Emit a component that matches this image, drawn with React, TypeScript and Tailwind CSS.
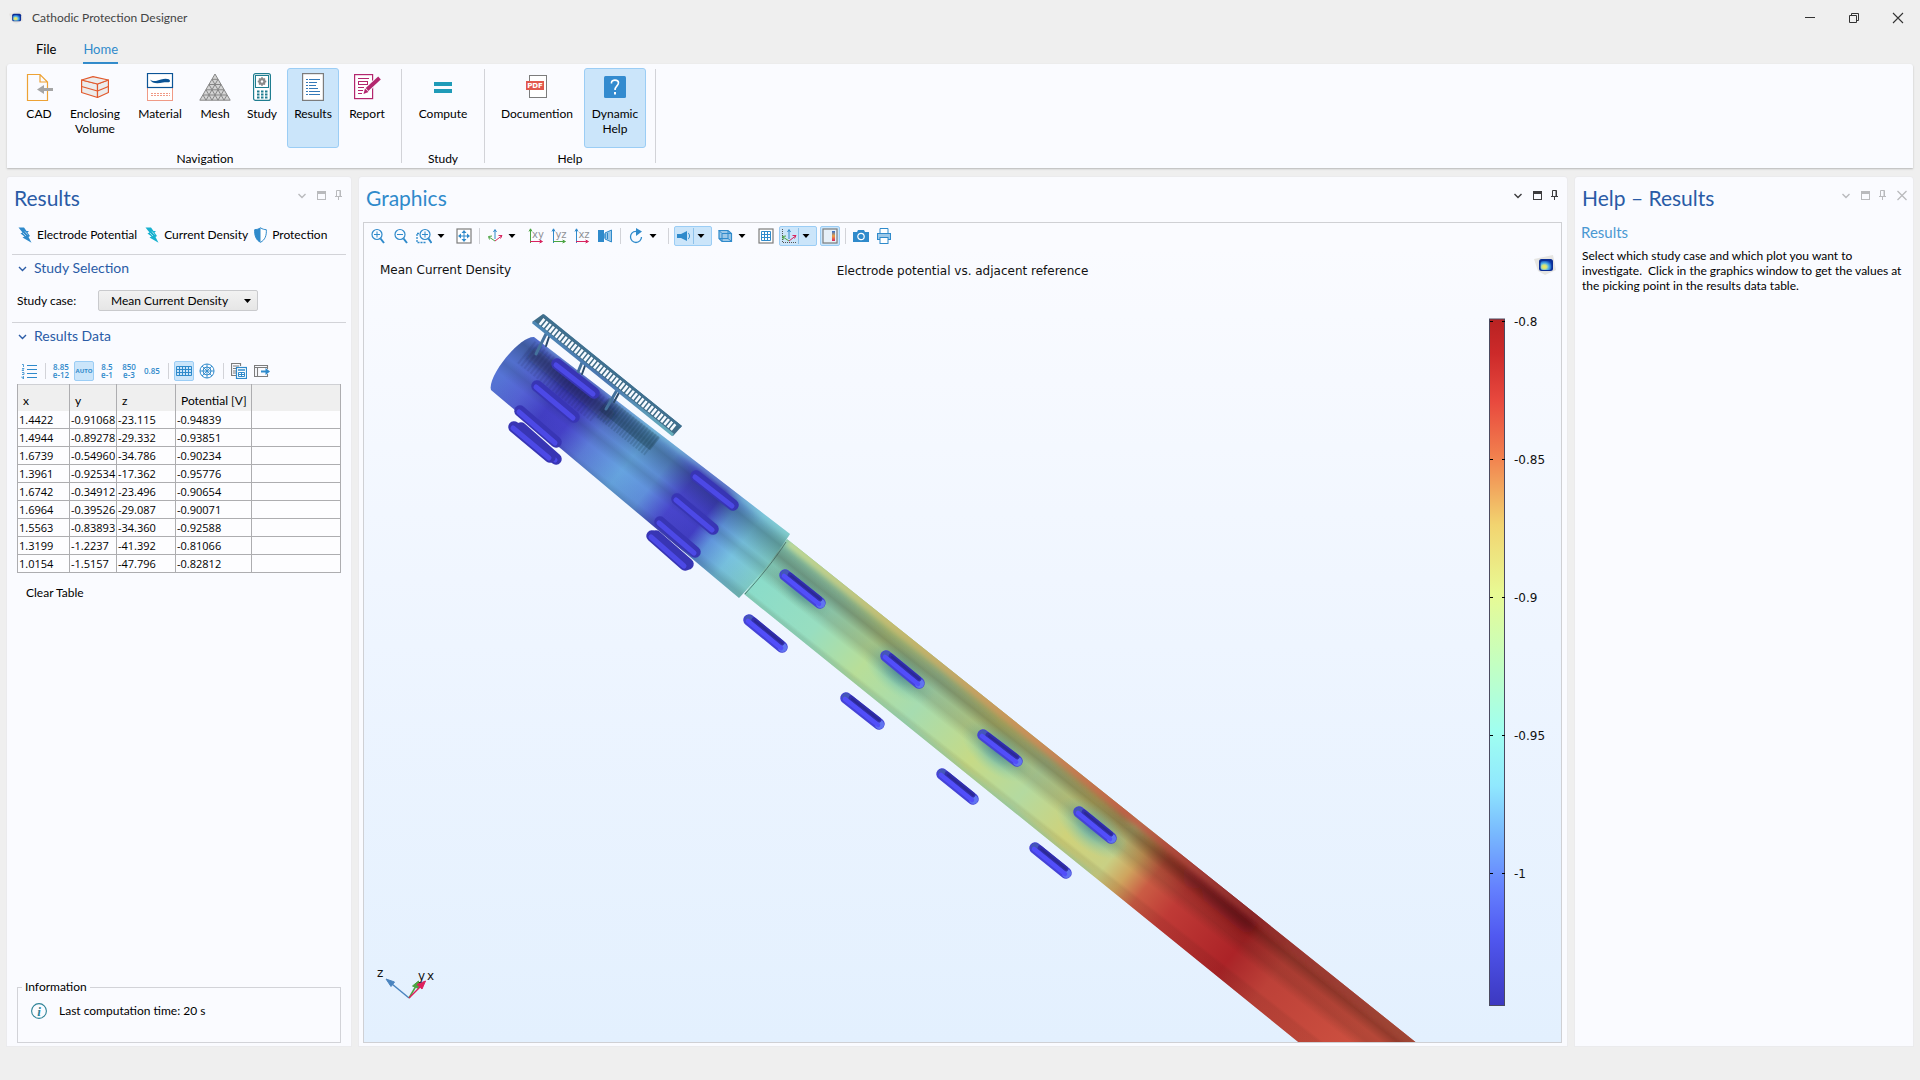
import React from "react";

const BLUE = "#2f8acb";

/* ---------- shared bits ---------- */

function Svg({ size = 16, w, h, children }: { size?: number; w?: number; h?: number; children: React.ReactNode }) {
  const ww = w ?? size;
  const hh = h ?? size;
  return (
    <svg width={ww} height={hh} viewBox={`0 0 ${ww} ${hh}`} fill="none" aria-hidden="true" className="shrink-0">
      {children}
    </svg>
  );
}

function Logo({ id, w = 22, h = 20 }: { id: string; w?: number; h?: number }) {
  return (
    <svg width={w} height={h} viewBox="0 0 22 20" aria-hidden="true" className="shrink-0">
      <defs>
        <radialGradient id={id} cx="0.35" cy="0.65" r="0.75">
          <stop offset="0" stopColor="#ffe94a" />
          <stop offset="0.3" stopColor="#c8e08a" />
          <stop offset="0.55" stopColor="#4fb0e8" />
          <stop offset="1" stopColor="#0a3ab0" />
        </radialGradient>
      </defs>
      <path d="M0 4 L19 0 L22 15 L11 20 L4 16 Z" fill="#e6e5e2" />
      <rect x="5" y="4" width="14" height="12" rx="2.5" fill="#0b2d94" />
      <rect x="6.5" y="6" width="11" height="9" rx="2" fill={`url(#${id})`} />
    </svg>
  );
}

function PanelControls({ close, color }: { close?: boolean; color: string }) {
  return (
    <div className={`flex items-center ${color}`}>
      <button aria-label="Panel menu" className="mr-[10px]">
        <Svg w={10} h={14}>
          <path d="M1.5 5 L5 8.5 L8.5 5" stroke="currentColor" strokeWidth="1.4" />
        </Svg>
      </button>
      <button aria-label="Maximize panel" className="mr-2">
        <Svg w={9} h={14}>
          <rect x="0.5" y="2.5" width="8" height="8" stroke="currentColor" />
          <rect x="0" y="2" width="9" height="3" fill="currentColor" />
        </Svg>
      </button>
      <button aria-label="Pin panel">
        <Svg w={9} h={14}>
          <path d="M2.5 7 V1.5 H6.5 V7 M1 7.5 H8 M4.5 7.5 V11" stroke="currentColor" />
          <path d="M6 1.5 V7" stroke="currentColor" />
        </Svg>
      </button>
      {close && (
        <button aria-label="Close panel" className="ml-[10px]">
          <Svg w={10} h={14}>
            <path d="M0.5 2 L9.5 11 M9.5 2 L0.5 11" stroke="currentColor" strokeWidth="1.3" />
          </Svg>
        </button>
      )}
    </div>
  );
}

/* ---------- ribbon ---------- */

const IconCad = () => (
  <Svg size={28}>
    <path d="M2.5 1.5 H15 L22.5 9 V27.5 H2.5 Z M15 1.5 V9 H22.5" stroke="#eda235" strokeWidth="1.2" />
    <path d="M18 16.5 H28" stroke="#a5a5a5" strokeWidth="3" />
    <path d="M12 16.5 L19 12 V21 Z" fill="#a5a5a5" />
  </Svg>
);
const IconVolume = () => (
  <Svg size={28}>
    <g fill="#ececec" stroke="#e2592c" strokeWidth="1.2" strokeLinejoin="round">
      <path d="M0.6 7 L16.5 11 V24.5 L0.6 19.5 Z" />
      <path d="M27.4 7 L16.5 11 V24.5 L27.4 19.5 Z" />
      <path d="M0.6 7 L12 3.6 L27.4 7 L16.5 11 Z" />
      <path d="M0.6 13.5 L16.5 18 L27.4 13.5" fill="none" />
    </g>
  </Svg>
);
const IconMaterial = () => (
  <Svg size={28}>
    <rect x="1.5" y="14.5" width="25" height="13" stroke="#f09a86" fill="#fff" />
    <path d="M5 20.5 H24 M5 22.5 H24" stroke="#f09a86" strokeDasharray="2 1" />
    <rect x="1.5" y="0.5" width="25" height="14" stroke="#0b5496" strokeWidth="1.2" fill="#fff" />
    <path d="M4 6.5 C7 9 11 8 15 6.5 C19 5 24 5.5 24 8 C24 10 20 9 17 9.5 C12 10.5 6 11 4 6.5 Z" fill="#0b5496" />
  </Svg>
);
const IconMesh = () => (
  <Svg w={32} h={28}>
    <g stroke="#868686" fill="#d4d4d4">
      <path d="M16 1 L31.2 27.2 H0.8 Z" />
      <path
        d="M13 6.3 H19 M10 11.5 H22 M7 16.8 H25 M4 22 H28 M13 6.3 L25 27.2 M10 11.5 L19 27.2 M7 16.8 L13 27.2 M4 22 L7 27.2 M19 6.3 L7 27.2 M22 11.5 L13 27.2 M25 16.8 L19 27.2 M28 22 L25 27.2"
        fill="none"
      />
    </g>
  </Svg>
);
const IconStudy = () => (
  <Svg w={18} h={28}>
    <rect x="0.6" y="0.6" width="16.8" height="26.8" rx="2" stroke="#1f7d90" strokeWidth="1.2" fill="#fff" />
    <rect x="2.5" y="2.5" width="13" height="12" stroke="#1f7d90" fill="#fff" />
    <circle cx="9" cy="8.5" r="2.7" stroke="#8a8a8a" strokeWidth="1.8" />
    <path d="M9 4 V13 M4.7 8.5 H13.3 M6 5.5 L12 11.5 M12 5.5 L6 11.5" stroke="#8a8a8a" strokeWidth="1.4" />
    <circle cx="9" cy="8.5" r="1.2" fill="#fff" />
    <path d="M4 18.5 H14.5 M4 21.5 H14.5 M4 24.5 H14.5" stroke="#1f7d90" strokeWidth="2" strokeDasharray="2.5 1.5" />
  </Svg>
);
const IconResults = () => (
  <Svg w={22} h={28}>
    <rect x="0.6" y="0.6" width="20.8" height="26.8" stroke="#7c7c7c" strokeWidth="1.2" fill="#fff" />
    <path
      d="M4 6.5 H6 M4 9.5 H6 M4 12.5 H6 M4 15.5 H6 M4 18.5 H6 M4 21.5 H6 M7 6.5 H18 M7 9.5 H15 M7 12.5 H14 M7 15.5 H16 M7 18.5 H18 M7 21.5 H18"
      stroke="#3479b8"
    />
  </Svg>
);
const IconReport = () => (
  <Svg size={28}>
    <rect x="1.6" y="1.6" width="18" height="24" stroke="#b3266e" strokeWidth="1.2" fill="#fff" />
    <path d="M5 5.5 H16 M5 14.5 H11 M5 17.5 H10 M5 20.5 H9" stroke="#b3266e" strokeWidth="1.2" />
    <rect x="5.5" y="8.5" width="9" height="3" stroke="#b3266e" />
    <path d="M14 17 L26 5" stroke="#fafbff" strokeWidth="5.5" />
    <path d="M14 16.5 L26.5 5" stroke="#b3266e" strokeWidth="3.8" />
    <path d="M10.5 21 L12 15.5 L15.5 19 Z" fill="#b3266e" />
  </Svg>
);
const IconCompute = () => (
  <Svg size={28}>
    <rect x="5" y="9" width="18" height="4" fill="#1f9bb8" />
    <rect x="5" y="16" width="18" height="4" fill="#1f9bb8" />
  </Svg>
);
const IconPdf = () => (
  <Svg size={28}>
    <rect x="6.5" y="2.5" width="17" height="22" stroke="#7c7c7c" fill="#fff" />
    <rect x="3" y="8" width="18" height="9" fill="#e2574c" />
    <text x="12" y="15" fontSize="7" fontWeight="700" fill="#fff" textAnchor="middle" fontFamily="DejaVu Sans, sans-serif">
      PDF
    </text>
  </Svg>
);
const IconHelp = () => (
  <Svg size={28}>
    <rect x="3" y="3" width="22" height="22" rx="1.5" fill="#338bcf" />
    <path d="M10.5 10.5 V9.5 C10.5 6.3 17.5 6.3 17.5 9.8 C17.5 12.8 14 13 14 17" stroke="#fff" strokeWidth="1.6" />
    <rect x="13" y="19" width="2" height="2.5" fill="#fff" />
  </Svg>
);

function RibbonButton({ icon, label, width, active }: { icon: React.ReactNode; label: React.ReactNode; width: string; active?: boolean }) {
  return (
    <button
      className={`flex h-20 flex-col items-center rounded-[3px] border pt-1 text-center ${width} ${
        active ? "border-[#9bcdf5] bg-[#cbe5fa]" : "border-transparent"
      }`}
    >
      {icon}
      <span className="mt-[5px] whitespace-nowrap leading-[15px]">{label}</span>
    </button>
  );
}

function RibbonGroup({ label, pad, children }: { label: string; pad: string; children: React.ReactNode }) {
  return (
    <>
      <section aria-label={label} className={`flex flex-col pt-1 ${pad}`}>
        <div className="flex gap-1">{children}</div>
        <div className="text-center leading-[21px]">{label}</div>
      </section>
      <div className="my-[5px] w-px bg-[#d2d3d8]" />
    </>
  );
}

/* ---------- left panel ---------- */

function Bolt({ color }: { color: string }) {
  return (
    <Svg w={14} h={16}>
      <path d="M0.5 0.5 H6 L8.5 4 H11 L9.5 5.5 L12 9 L10.5 10 L13.5 15.8 L4.5 10.5 L6.5 9.5 L2.5 6.5 L4.5 5.5 Z" fill={color} />
      <path d="M5 6 L8 9 M7 4.5 L9.5 7.5" stroke="#fafbff" strokeWidth="0.6" />
    </Svg>
  );
}

function SectionTitle({ children }: { children: React.ReactNode }) {
  return (
    <button className="flex items-center gap-[7px] self-start pl-[6px] text-[14px] leading-5 text-[#2a5ba6]">
      <Svg w={9} h={9}>
        <path d="M1 3 L4.5 6.5 L8 3" stroke="#2a5ba6" strokeWidth="1.4" />
      </Svg>
      {children}
    </button>
  );
}

function NumFormat({ a, b, label }: { a: string; b: string; label: string }) {
  return (
    <button
      aria-label={label}
      className="w-[18px] whitespace-nowrap font-['Open_Sans',sans-serif] text-[8px] font-semibold leading-2 text-[#2f8acb]"
    >
      {a}
      <br />
      {b}
    </button>
  );
}

const ROWS = [
  ["1.4422", "-0.91068", "-23.115", "-0.94839"],
  ["1.4944", "-0.89278", "-29.332", "-0.93851"],
  ["1.6739", "-0.54960", "-34.786", "-0.90234"],
  ["1.3961", "-0.92534", "-17.362", "-0.95776"],
  ["1.6742", "-0.34912", "-23.496", "-0.90654"],
  ["1.6964", "-0.39526", "-29.087", "-0.90071"],
  ["1.5563", "-0.83893", "-34.360", "-0.92588"],
  ["1.3199", "-1.2237", "-41.392", "-0.81066"],
  ["1.0154", "-1.5157", "-47.796", "-0.82812"],
];

function ResultsPanel() {
  return (
    <aside className="flex flex-col rounded-t-[3px] bg-[#fafbff] shadow-[0_0_0_1px_#ebebed]">
      <div className="flex h-[42px] items-center justify-between pl-[7px] pr-2">
        <h2 className="text-[21px] leading-7 text-[#2a5ba6]">Results</h2>
        <div className="-mt-1">
          <PanelControls color="text-[#b9babd]" />
        </div>
      </div>
      <div className="flex h-[35px] items-center whitespace-nowrap pb-1 pl-[11px]">
        <button className="flex items-center gap-[5px]">
          <Bolt color="#2f8acb" /> Electrode Potential
        </button>
        <button className="ml-2 flex items-center gap-[5px]">
          <Bolt color="#17b1cf" /> Current Density
        </button>
        <button className="ml-[6px] flex items-center gap-[5px]">
          <Svg w={13} h={16}>
            <path d="M6.5 0.8 C4.5 2.3 2.5 2.5 0.7 2.7 C0.3 8.5 2 13 6.5 15.3 C11 13 12.7 8.5 12.3 2.7 C10.5 2.5 8.5 2.3 6.5 0.8 Z" fill="#fff" stroke={BLUE} />
            <path d="M6.5 0.8 C4.5 2.3 2.5 2.5 0.7 2.7 C0.3 8.5 2 13 6.5 15.3 Z" fill={BLUE} />
          </Svg>
          Protection
        </button>
      </div>
      <section className="mx-[5px] flex h-17 flex-col border-t border-[#d2d3d8] pt-[3px]">
        <SectionTitle>Study Selection</SectionTitle>
        <div className="mt-3 flex items-center pl-[5px]">
          <label htmlFor="study-case" className="w-[81px]">
            Study case:
          </label>
          <div className="relative">
            <select
              id="study-case"
              className="h-[21px] w-40 appearance-none rounded-[2px] border border-[#c9cacd] bg-linear-to-b from-[#f2f2f2] to-[#e6e6e6] pl-3"
            >
              <option>Mean Current Density</option>
            </select>
            <svg width="7" height="4" viewBox="0 0 7 4" className="pointer-events-none absolute right-[7px] top-[9px]" aria-hidden="true">
              <path d="M0 0 H7 L3.5 4 Z" fill="#000" />
            </svg>
          </div>
        </div>
      </section>
      <section className="mx-[5px] flex flex-col border-t border-[#d2d3d8] pt-[3px]">
        <SectionTitle>Results Data</SectionTitle>
        <div className="mt-[15px] flex h-5 items-center pl-[9px]">
          <button aria-label="Precision">
            <Svg w={16} h={16}>
              <path d="M6 2.5 H16 M6 6.5 H16 M6 10.5 H16 M6 14.5 H16" stroke={BLUE} />
              <path d="M1 1.5 H2.5 V4 M1 5.5 H3 L1 7.5 H3 M1 9.5 H3 V11.5 H1 M1 13.5 V15 H3 M2.5 13 V16" stroke={BLUE} strokeWidth="0.8" />
            </Svg>
          </button>
          <div className="ml-2 h-4 w-px bg-[#d2d3d8]" />
          <div className="ml-[6px] flex items-center gap-1">
            <NumFormat a="8.85" b="e-12" label="Full precision" />
            <button className="h-5 w-5 rounded-[2px] border border-[#9bcdf5] bg-[#cbe5fa] text-center font-['Open_Sans',sans-serif] text-[6px] font-bold text-[#2f8acb]">
              AUTO
            </button>
          </div>
          <div className="ml-1 flex items-center gap-1">
            <NumFormat a="8.5" b="e-1" label="Scientific notation" />
            <NumFormat a="850" b="e-3" label="Engineering notation" />
            <button className="ml-px w-[18px] font-['Open_Sans',sans-serif] text-[8px] font-semibold text-[#2f8acb]">0.85</button>
          </div>
          <div className="ml-[7px] h-4 w-px bg-[#d2d3d8]" />
          <button aria-label="Table view" className="ml-[5px] flex h-5 w-5 items-center justify-center rounded-[2px] border border-[#9bcdf5] bg-[#cbe5fa]">
            <Svg w={16} h={10}>
              <path d="M0.5 0.5 H15.5 V9.5 H0.5 Z M0.5 3.5 H15.5 M0.5 6.5 H15.5 M3.5 0 V10 M6.5 0 V10 M9.5 0 V10 M12.5 0 V10" stroke={BLUE} />
            </Svg>
          </button>
          <button aria-label="Polar view" className="ml-[5px]">
            <Svg size={16}>
              <circle cx="8" cy="8" r="7" stroke={BLUE} />
              <circle cx="8" cy="8" r="4" stroke={BLUE} />
              <path d="M8 1 V15 M1 8 H15 M3 3 L13 13 M13 3 L3 13" stroke={BLUE} strokeWidth="0.9" />
            </Svg>
          </button>
          <div className="ml-2 h-4 w-px bg-[#d2d3d8]" />
          <button aria-label="Copy table" className="ml-[7px]">
            <Svg size={16}>
              <path d="M5 12.5 H0.5 V0.5 H9.5 V3" stroke="#7c7c7c" strokeWidth="1.2" />
              <path d="M2 3 H8 M2 5.5 H5 M2 8 H5 M2 10 H5" stroke="#7c7c7c" strokeWidth="1.2" />
              <rect x="5.5" y="4.5" width="10" height="11" stroke={BLUE} fill="#fff" strokeWidth="1.2" />
              <path d="M7 7 H14" stroke={BLUE} strokeWidth="1.5" />
              <path d="M7.5 9.5 H13.5 V13.5 H7.5 Z M10.5 9.5 V13.5 M7.5 11.5 H13.5" stroke={BLUE} />
            </Svg>
          </button>
          <button aria-label="Export" className="ml-[7px]">
            <Svg size={16}>
              <path d="M13.5 6 V2.5 H0.5 V13.5 H13.5 V11 M0.5 4.5 H13.5 M3.5 4.5 V13.5" stroke="#7c7c7c" strokeWidth="1.1" />
              <path d="M7 8.5 H12" stroke={BLUE} strokeWidth="2" />
              <path d="M11.5 5 L16 8.5 L11.5 12 Z" fill={BLUE} />
            </Svg>
          </button>
        </div>
      </section>
      <div className="mx-[10px] mt-[3px]">
        <table className="w-full table-fixed border-collapse border border-[#cfd0d4] text-left">
          <colgroup>
            <col className="w-[52px]" />
            <col className="w-[47px]" />
            <col className="w-[59px]" />
            <col className="w-[76px]" />
            <col />
          </colgroup>
          <thead>
            <tr className="h-[26px] bg-[#efefef]">
              {["x", "y", "z", "Potential [V]", ""].map((h, i) => (
                <th key={i} className="whitespace-nowrap border-x border-[#adadb0] pl-[5px] pt-[6px] font-normal leading-[18px]">
                  {h}
                </th>
              ))}
            </tr>
          </thead>
          <tbody className="font-['Open_Sans',sans-serif] text-[11px]">
            {ROWS.map((r, i) => (
              <tr key={i} className="h-[18px] bg-[#fdfdff]">
                {[...r, ""].map((c, j) => (
                  <td key={j} className={`whitespace-nowrap border-x border-b border-[#adadb0] pl-px leading-[17px] ${i === 0 ? "" : "border-t"}`}>
                    {c}
                  </td>
                ))}
              </tr>
            ))}
          </tbody>
        </table>
      </div>
      <button className="ml-[19px] mt-3 self-start leading-4">Clear Table</button>
      <fieldset className="mx-[10px] mb-[3px] mt-auto h-16 border border-[#d2d3d8] pl-[13px]">
        <legend className="-ml-[9px] px-[3px] leading-4">Information</legend>
        <div className="mt-[7px] flex items-center gap-3">
          <Svg size={16}>
            <circle cx="8" cy="8" r="7.4" stroke="#2d8296" strokeWidth="1.1" />
            <text x="8" y="12.5" fontSize="13" fontStyle="italic" fontWeight="700" textAnchor="middle" fill="#2d8296" fontFamily="Liberation Serif, serif">
              i
            </text>
          </Svg>
          Last computation time: 20 s
        </div>
      </fieldset>
    </aside>
  );
}

/* ---------- graphics toolbar ---------- */

function Tool({ label, gap, children }: { label: string; gap: string; children: React.ReactNode }) {
  return (
    <button aria-label={label} className={`flex shrink-0 items-center ${gap}`}>
      {children}
    </button>
  );
}
const Caret = ({ gap, label }: { gap: string; label: string }) => (
  <Tool label={label} gap={gap}>
    <Svg w={8} h={16}>
      <path d="M0.5 6 H7.5 L4 10 Z" fill="#000" />
    </Svg>
  </Tool>
);
const Sep = ({ gap }: { gap: string }) => <div className={`h-4 w-px shrink-0 bg-[#d2d3d8] ${gap}`} />;

const PLANES: Record<string, [string, string]> = {
  xy: ["#4ba442", "#d8245f"],
  yz: [BLUE, "#4ba442"],
  xz: [BLUE, "#d8245f"],
};

function PlaneIcon({ t }: { t: string }) {
  const [vert, hor] = PLANES[t];
  return (
    <Svg size={16}>
      <path d="M2.5 15 V1 M1 3.5 L2.5 0.8 L4 3.5" stroke={vert} />
      <path d="M2 13.5 H14 M11.5 12 L14.5 13.5 L11.5 15" stroke={hor} />
      <text x="10" y="9.5" fontSize="10" textAnchor="middle" fill="#8f9196" fontFamily="DejaVu Sans, sans-serif">
        {t}
      </text>
    </Svg>
  );
}

const Magnifier = ({ plus, box }: { plus?: boolean; box?: boolean }) => (
  <Svg size={16}>
    {box && <path d="M1 6 V14.5 H10 M1 5.5 H4" stroke={BLUE} strokeDasharray="2 1" strokeWidth="1.3" />}
    <circle cx={box ? 9 : 7} cy="6.5" r="5" stroke={BLUE} strokeWidth="1.2" />
    <path d={box ? "M12.5 10.5 L15.5 15" : "M10.5 10.5 L14 15"} stroke={BLUE} strokeWidth="2" />
    <path d={box ? "M6 6.5 H12 M9 3.5 V9.5" : plus ? "M4 6.5 H10 M7 3.5 V9.5" : "M4 6.5 H10"} stroke={BLUE} />
  </Svg>
);
const Triad = ({ boxed }: { boxed?: boolean }) => (
  <Svg size={16}>
    {boxed && <path d="M1.5 1 V14.5 H15" stroke="#555" strokeDasharray="1 1" />}
    <path d="M8 11 V2 M6.5 4 L8 1.5 L9.5 4" stroke={BLUE} />
    <path d="M8 13 L2 9 M2.5 11.5 L1.5 8.5 L5 8" stroke="#4ba442" />
    <path d="M8 13 L14.5 8 M11.5 7.5 L15 7.5 L13.5 10.5" stroke="#d8245f" />
  </Svg>
);

function GraphicsToolbar() {
  return (
    <div className="flex h-[26px] items-center pl-[6px]">
      <Tool label="Zoom in" gap=""><Magnifier plus /></Tool>
      <Tool label="Zoom out" gap="ml-[7px]"><Magnifier /></Tool>
      <Tool label="Zoom box" gap="ml-[7px]"><Magnifier box /></Tool>
      <Caret gap="ml-[5px]" label="Zoom options" />
      <Tool label="Zoom extents" gap="ml-[11px]">
        <Svg size={16}>
          <rect x="1" y="1" width="14" height="14" stroke="#7c7c7c" strokeWidth="1.2" fill="#fff" />
          <path d="M8 5 V11 M5 8 H11" stroke={BLUE} />
          <path d="M8 2 L10.5 5 H5.5 Z M8 14 L10.5 11 H5.5 Z M2 8 L5 5.5 V10.5 Z M14 8 L11 5.5 V10.5 Z" fill={BLUE} />
        </Svg>
      </Tool>
      <Sep gap="ml-[7px]" />
      <Tool label="Default view" gap="ml-[7px]"><Triad /></Tool>
      <Caret gap="ml-[5px]" label="View options" />
      <Tool label="View xy plane" gap="ml-3"><PlaneIcon t="xy" /></Tool>
      <Tool label="View yz plane" gap="ml-[7px]"><PlaneIcon t="yz" /></Tool>
      <Tool label="View xz plane" gap="ml-[7px]"><PlaneIcon t="xz" /></Tool>
      <Tool label="View camera" gap="ml-[7px]">
        <Svg size={16}>
          <rect x="1" y="2" width="6" height="12" fill={BLUE} />
          <path d="M8 5 L14.5 2 V14 L8 11 Z" fill="#9cc8e8" stroke={BLUE} />
          <path d="M8 6 V10 M10.5 5 V11" stroke={BLUE} />
        </Svg>
      </Tool>
      <Sep gap="ml-[7px]" />
      <Tool label="Rotate" gap="ml-[7px]">
        <Svg size={16}>
          <path d="M9 3.5 C4 3 2.5 6.5 2.5 9 C2.5 12 5 14.5 8 14.5 C11 14.5 13.5 12 13.5 9" stroke={BLUE} strokeWidth="1.3" />
          <path d="M8 0 L14 3.5 L8 8 Z" fill={BLUE} />
        </Svg>
      </Tool>
      <Caret gap="ml-[5px]" label="Rotate options" />
      <Sep gap="ml-[11px]" />
      <div className="ml-[5px] flex h-5 w-[38px] shrink-0 items-center rounded-[2px] border border-[#9bcdf5] bg-[#cbe5fa]">
        <Tool label="Scene light" gap="ml-px">
          <Svg size={16}>
            <path d="M1 6 H5 L11 3 V13 L5 10 H1 Z" fill={BLUE} />
            <path d="M12 5 C14 6 14 10 12 11" stroke={BLUE} />
          </Svg>
        </Tool>
        <div className="ml-px h-4 w-px bg-[#8fc2ea]" />
        <Caret gap="ml-[3px]" label="Light options" />
      </div>
      <Tool label="Transparency" gap="ml-[5px]">
        <Svg size={16}>
          <path d="M2 2.5 H11 L14.5 5.5 V13.5 H5 L2 10.5 Z" fill="#9cc8e8" stroke={BLUE} strokeWidth="1.2" />
          <path d="M5 5.5 H14 M5 5.5 V13 M2 2.5 L5 5.5 M2 10.5 H11 V3 M11 10.5 L14 13" stroke={BLUE} />
        </Svg>
      </Tool>
      <Caret gap="ml-[5px]" label="Transparency options" />
      <Tool label="Show grid" gap="ml-3">
        <Svg size={16}>
          <rect x="1" y="1" width="14" height="14" stroke="#7c7c7c" strokeWidth="1.2" fill="#fff" />
          <path d="M3.5 3.5 H12.5 V12.5 H3.5 Z M6.5 3.5 V12.5 M9.5 3.5 V12.5 M3.5 6.5 H12.5 M3.5 9.5 H12.5" stroke={BLUE} />
        </Svg>
      </Tool>
      <div className="ml-[5px] flex h-5 w-[38px] shrink-0 items-center rounded-[2px] border border-[#9bcdf5] bg-[#cbe5fa]">
        <Tool label="Show axes" gap="ml-px"><Triad boxed /></Tool>
        <div className="ml-px h-4 w-px bg-[#8fc2ea]" />
        <Caret gap="ml-[3px]" label="Axes options" />
      </div>
      <button aria-label="Show legends" className="ml-[3px] flex h-5 w-5 shrink-0 items-center justify-center rounded-[2px] border border-[#9bcdf5] bg-[#cbe5fa]">
        <svg width="16" height="16" viewBox="0 0 16 16" fill="none" aria-hidden="true">
          <defs>
            <linearGradient id="leg" x1="0" y1="0" x2="0" y2="1">
              <stop offset="0" stopColor="#2f6fd0" />
              <stop offset="0.5" stopColor="#f0a040" />
              <stop offset="1" stopColor="#d8245f" />
            </linearGradient>
          </defs>
          <rect x="1" y="1" width="14" height="14" stroke="#7c7c7c" strokeWidth="1.2" fill="#e6f0f8" />
          <rect x="10" y="3" width="3" height="10" fill="url(#leg)" />
        </svg>
      </button>
      <Sep gap="ml-[5px]" />
      <Tool label="Image snapshot" gap="ml-[7px]">
        <Svg size={16}>
          <path d="M0 4 H4 L5 2 H11 L12 4 H16 V14 H0 Z" fill={BLUE} />
          <circle cx="8" cy="8.5" r="3.2" stroke="#fff" strokeWidth="1.2" />
        </Svg>
      </Tool>
      <Tool label="Print" gap="ml-[7px]">
        <Svg size={16}>
          <path d="M4 6 V0.5 H12 V6" stroke={BLUE} fill="#fff" />
          <rect x="1.5" y="5.5" width="13" height="6" stroke={BLUE} fill="#9cc8e8" />
          <rect x="4" y="9.5" width="8" height="6" stroke={BLUE} fill="#fff" />
        </Svg>
      </Tool>
    </div>
  );
}

/* ---------- 3D scene ---------- */

type Seg = [number, number, number, number];

const ANODES: Seg[] = [
  [785, 575, 820, 603],
  [886, 656, 919, 683],
  [983, 735, 1017, 761],
  [1079, 812, 1111, 838],
  [749, 620, 782, 647],
  [846, 698, 879, 724],
  [942, 774, 973, 799],
  [1035, 848, 1066, 873],
];
const TOP_ANODES: Seg[] = [
  [557, 364, 594, 393],
  [537, 386, 574, 417],
  [520, 411, 556, 442],
  [521, 428, 556, 459],
  [514, 427, 550, 457],
  [696, 476, 733, 505],
  [677, 499, 713, 529],
  [660, 522, 695, 552],
  [656, 536, 688, 564],
  [652, 536, 685, 565],
];

function Anode({ s, top }: { s: Seg; top?: boolean }) {
  const [x1, y1, x2, y2] = s;
  return (
    <g strokeLinecap="round">
      <path d={`M${x1} ${y1} L${x2} ${y2}`} stroke={top ? "#3835b4" : "#4543d6"} strokeWidth="11.5" />
      {!top && <path d={`M${x2 + 0.5} ${y2 + 0.5} l0.1 0`} stroke="#6074f0" strokeWidth="9" />}
      {!top && <path d={`M${x1} ${y1 - 1} l0.1 0`} stroke="#4456b8" strokeWidth="8" />}
      {!top && <path d={`M${x1 + 5} ${y1} L${x2} ${y2 - 4}`} stroke="#322fac" strokeWidth="5" />}
      {!top && <path d={`M${x1 + 6} ${y1 + 1} L${x2} ${y2 - 4}`} stroke="#2c2994" strokeWidth="2" />}
      <path
        d={`M${x1 - 1} ${y1 + 1} L${x2 - 1} ${y2 + 1}`}
        stroke={top ? "#4c49e6" : "#524efa"}
        strokeWidth={top ? 5 : 4.5}
      />
    </g>
  );
}

const TICKS: [string, number][] = [
  ["-0.8", 322],
  ["-0.85", 460],
  ["-0.9", 598],
  ["-0.95", 736],
  ["-1", 874],
];

function Scene() {
  return (
    <svg
      viewBox="364 249 1197 793"
      preserveAspectRatio="xMidYMid slice"
      className="absolute inset-0 h-full w-full"
      role="img"
      aria-label="Electrode potential on the protected structure"
    >
      <defs>
        <linearGradient id="main-along" gradientUnits="userSpaceOnUse" x1="766" y1="567" x2="1357" y2="1042">
          <stop offset="0" stopColor="#8adcca" />
          <stop offset="0.1" stopColor="#98dec0" />
          <stop offset="0.18" stopColor="#b8de98" />
          <stop offset="0.27" stopColor="#a6dcb0" />
          <stop offset="0.37" stopColor="#c6da86" />
          <stop offset="0.45" stopColor="#b4daa0" />
          <stop offset="0.53" stopColor="#cfd27a" />
          <stop offset="0.595" stopColor="#c9d084" />
          <stop offset="0.625" stopColor="#cfa45e" />
          <stop offset="0.655" stopColor="#ca5c44" />
          <stop offset="0.7" stopColor="#bf3a36" />
          <stop offset="0.8" stopColor="#ac2327" />
          <stop offset="0.812" stopColor="#ac2a2b" />
          <stop offset="0.86" stopColor="#bd4138" />
          <stop offset="1" stopColor="#cd5040" />
        </linearGradient>
        <linearGradient id="main-shade" gradientUnits="userSpaceOnUse" x1="975" y1="690" x2="935" y2="741">
          <stop offset="0" stopColor="#281408" stopOpacity="0.1" />
          <stop offset="0.12" stopColor="#281408" stopOpacity="0.24" />
          <stop offset="0.24" stopColor="#281408" stopOpacity="0.36" />
          <stop offset="0.4" stopColor="#281408" stopOpacity="0.14" />
          <stop offset="0.54" stopColor="#281408" stopOpacity="0.17" />
          <stop offset="0.7" stopColor="#281408" stopOpacity="0" />
          <stop offset="0.95" stopColor="#281408" stopOpacity="0" />
          <stop offset="1" stopColor="#281408" stopOpacity="0.08" />
        </linearGradient>
        <linearGradient id="main-rim" gradientUnits="userSpaceOnUse" x1="790" y1="541" x2="1414" y2="1042">
          <stop offset="0" stopColor="#c8dc96" />
          <stop offset="0.2" stopColor="#c8b46c" />
          <stop offset="0.4" stopColor="#cf8a58" />
          <stop offset="0.55" stopColor="#c45c48" />
          <stop offset="0.75" stopColor="#8e2c2c" />
          <stop offset="0.85" stopColor="#983a32" />
          <stop offset="1" stopColor="#9c4836" />
        </linearGradient>
        <linearGradient id="red-core" gradientUnits="userSpaceOnUse" x1="1100" y1="800" x2="1272" y2="938">
          <stop offset="0" stopColor="#5c1014" stopOpacity="0" />
          <stop offset="0.8" stopColor="#5c0c10" stopOpacity="0.5" />
          <stop offset="0.96" stopColor="#5c0c10" stopOpacity="0.5" />
          <stop offset="1" stopColor="#5c1014" stopOpacity="0.1" />
        </linearGradient>
        <linearGradient id="warm" gradientUnits="userSpaceOnUse" x1="800" y1="550" x2="1150" y2="830">
          <stop offset="0" stopColor="#bcc84c" stopOpacity="0.3" />
          <stop offset="0.3" stopColor="#c0b43c" stopOpacity="0.5" />
          <stop offset="0.7" stopColor="#b87c2c" stopOpacity="0.6" />
          <stop offset="1" stopColor="#a83c2c" stopOpacity="0.8" />
        </linearGradient>
        <linearGradient id="top-along" gradientUnits="userSpaceOnUse" x1="513" y1="363" x2="765" y2="566">
          <stop offset="0" stopColor="#5674d6" />
          <stop offset="0.08" stopColor="#5462d4" />
          <stop offset="0.17" stopColor="#423ec4" />
          <stop offset="0.25" stopColor="#4541c8" />
          <stop offset="0.34" stopColor="#5c7cd8" />
          <stop offset="0.47" stopColor="#66a4e0" />
          <stop offset="0.57" stopColor="#6090dc" />
          <stop offset="0.66" stopColor="#4845cc" />
          <stop offset="0.76" stopColor="#423ec4" />
          <stop offset="0.82" stopColor="#6094dc" />
          <stop offset="0.9" stopColor="#78c2e0" />
          <stop offset="1" stopColor="#80ccc8" />
        </linearGradient>
        <linearGradient id="top-shade" gradientUnits="userSpaceOnUse" x1="667" y1="439" x2="620" y2="499">
          <stop offset="0" stopColor="#0c2428" stopOpacity="0" />
          <stop offset="0.08" stopColor="#0c2428" stopOpacity="0.15" />
          <stop offset="0.18" stopColor="#0c2428" stopOpacity="0.32" />
          <stop offset="0.3" stopColor="#0c2428" stopOpacity="0.2" />
          <stop offset="0.45" stopColor="#0c2428" stopOpacity="0.05" />
          <stop offset="0.54" stopColor="#0c2428" stopOpacity="0.16" />
          <stop offset="0.68" stopColor="#0c2428" stopOpacity="0" />
          <stop offset="0.9" stopColor="#0c2428" stopOpacity="0.03" />
          <stop offset="1" stopColor="#0c2428" stopOpacity="0.18" />
        </linearGradient>
        <linearGradient id="bar" x1="0" y1="0" x2="0" y2="1">
          <stop offset="0" stopColor="#b82222" />
          <stop offset="0.05" stopColor="#cc2a2a" />
          <stop offset="0.12" stopColor="#e8493e" />
          <stop offset="0.2" stopColor="#f2804e" />
          <stop offset="0.3" stopColor="#f2d470" />
          <stop offset="0.4" stopColor="#e8fa94" />
          <stop offset="0.5" stopColor="#c4ffc0" />
          <stop offset="0.6" stopColor="#a0fff0" />
          <stop offset="0.68" stopColor="#90e8fe" />
          <stop offset="0.75" stopColor="#78b8fe" />
          <stop offset="0.83" stopColor="#6480fe" />
          <stop offset="0.9" stopColor="#5058f0" />
          <stop offset="1" stopColor="#3c38c0" />
        </linearGradient>
        <radialGradient id="halo">
          <stop offset="0" stopColor="#4a9cb8" stopOpacity="0.85" />
          <stop offset="0.4" stopColor="#64b4b0" stopOpacity="0.65" />
          <stop offset="1" stopColor="#8cd4b0" stopOpacity="0" />
        </radialGradient>
        <linearGradient id="ladder" gradientUnits="userSpaceOnUse" x1="540" y1="320" x2="680" y2="430">
          <stop offset="0" stopColor="#4c86b4" />
          <stop offset="0.5" stopColor="#4a76b0" />
          <stop offset="1" stopColor="#66b0bc" />
        </linearGradient>
        <clipPath id="main-clip">
          <path d="M787 539 L1087 779 L1418 1044 L1308 1050 L1123 900 L744 594 Z" />
        </clipPath>
        <clipPath id="top-clip">
          <path d="M534 337 C520 336 487 376 491 390 L739 598 C756 580 776 556 790 534 Z" />
        </clipPath>
        <filter id="soft" x="-20%" y="-20%" width="140%" height="140%">
          <feGaussianBlur stdDeviation="2.5" />
        </filter>
        <filter id="softer" x="-30%" y="-30%" width="160%" height="160%">
          <feGaussianBlur stdDeviation="6" />
        </filter>
      </defs>

      <g clipPath="url(#main-clip)">
        <rect x="700" y="500" width="760" height="560" fill="url(#main-along)" />
        <path d="M800 536 L1140 808" stroke="url(#warm)" strokeWidth="34" filter="url(#softer)" />
        <path d="M1110 796 L1262 918" stroke="url(#red-core)" strokeWidth="46" filter="url(#softer)" />
        <ellipse cx="801" cy="591" rx="38" ry="16" transform="rotate(38.7 801 591)" fill="url(#halo)" />
        {ANODES.slice(1, 4).map(([x1, y1, x2, y2], i) => (
          <ellipse
            key={i}
            cx={(x1 + x2) / 2 - 3}
            cy={(y1 + y2) / 2 + 3}
            rx="42"
            ry="22"
            transform={`rotate(38.7 ${(x1 + x2) / 2 - 3} ${(y1 + y2) / 2 + 3})`}
            fill="url(#halo)"
          />
        ))}
        <path d="M744 594 L1090 874" stroke="#86d0b8" strokeOpacity="0.6" strokeWidth="4" filter="url(#soft)" />
        <rect x="700" y="500" width="760" height="560" fill="url(#main-shade)" />
        <path d="M788 542 L1087 781 L1418 1048" stroke="url(#main-rim)" strokeWidth="8" strokeOpacity="0.9" fill="none" filter="url(#soft)" />
      </g>

      <g clipPath="url(#top-clip)">
        <rect x="480" y="320" width="320" height="290" fill="url(#top-along)" />
        <rect x="480" y="320" width="320" height="290" fill="url(#top-shade)" />
        <path d="M604 404 L655 444" stroke="#123240" strokeOpacity="0.3" strokeWidth="16" />
        <path d="M604 408 L652 446" stroke="#123240" strokeOpacity="0.18" strokeWidth="24" strokeDasharray="2 1.5" />
        <path d="M530 352 L612 418" stroke="#10183a" strokeOpacity="0.35" strokeWidth="14" filter="url(#soft)" />
        <path d="M526 352 L600 411" stroke="#10183a" strokeOpacity="0.1" strokeWidth="28" strokeDasharray="2 2" />
        <path d="M548 346 L790 536" stroke="#84ccd0" strokeOpacity="0.6" strokeWidth="5" filter="url(#soft)" />
      </g>
      <path d="M745 594 C758 580 776 558 786 542" stroke="#3a5a58" strokeOpacity="0.7" fill="none" />

      <g strokeWidth="3" strokeLinecap="round">
        <path d="M547 332 L536 354 M583 360 L578 372 M617 390 L606 409" stroke="#44719c" />
        <path d="M550 334 L546 346 M586 363 L582 374 M620 391 L614 402" stroke="#2c4c6c" strokeWidth="2" />
      </g>
      <path d="M543 314 L682 426 L673 436 L532 322 Z" fill="#3f6c88" />
      <path d="M541 321 L675 428.5" stroke="#f6faff" strokeWidth="7.5" strokeDasharray="2.6 1.5" />
      <path d="M533 322 L673 435" stroke="url(#ladder)" strokeWidth="3" />
      <path d="M543 315 L681 427" stroke="#3f7090" strokeWidth="2.5" />

      {TOP_ANODES.map((s, i) => (
        <Anode key={i} s={s} top />
      ))}
      {ANODES.map((s, i) => (
        <Anode key={i} s={s} />
      ))}

      <rect x="1489.5" y="319" width="15" height="686.5" fill="url(#bar)" stroke="#4a4a60" />
      <g fontFamily="DejaVu Sans, sans-serif" fontSize="12" fill="#111">
        {TICKS.map(([t, y]) => (
          <g key={t}>
            <path d={`M1490 ${y - 0.5} h3 M1502 ${y - 0.5} h3`} stroke="#000" />
            <text x="1514" y={y + 4}>
              {t}
            </text>
          </g>
        ))}
        <path d="M409 998 L392 984" stroke="#4a84bf" strokeWidth="1.5" />
        <path d="M386 979 L394.5 982 L391 986.5 Z" fill="#4a84bf" stroke="#4a84bf" />
        <path d="M409 998 L416 986" stroke="#4ba442" strokeWidth="1.5" />
        <path d="M418.5 981 L418.5 988.5 L412.5 986 Z" fill="#4ba442" stroke="#4ba442" />
        <path d="M409 998 L420 987" stroke="#dc1f5c" strokeWidth="1.5" />
        <path d="M425.5 981 L422 989 L417 984.5 Z" fill="#dc1f5c" stroke="#dc1f5c" />
        <text x="377" y="977">z</text>
        <text x="418" y="980">y</text>
        <text x="427" y="980">x</text>
      </g>
    </svg>
  );
}

function GraphicsPanel() {
  return (
    <main className="flex min-w-0 flex-col rounded-t-[3px] bg-[#fafbff] pb-[3px] pl-1 pr-[5px] shadow-[0_0_0_1px_#ebebed]">
      <div className="flex h-[45px] items-center justify-between pb-[3px] pl-[3px] pr-[3px]">
        <h2 className="text-[21px] leading-7 text-[#2f8acb]">Graphics</h2>
        <div className="-mt-1">
          <PanelControls color="text-[#3c3c3e]" />
        </div>
      </div>
      <div className="flex flex-1 flex-col border border-[#cfd0d4]">
        <GraphicsToolbar />
        <div className="relative flex-1 overflow-hidden bg-linear-to-b from-[#fafbff] via-[#eef5ff] to-[#e3f0fe]">
          <Scene />
          <div className="relative grid grid-cols-[1fr_auto_1fr] px-[5px] pt-[6px] font-['DejaVu_Sans',sans-serif] text-[12px] text-[#111]">
            <span className="pl-[11px] pt-[7px] leading-4">Mean Current Density</span>
            <span className="pt-2 leading-4">Electrode potential vs. adjacent reference</span>
            <span className="flex justify-end">
              <Logo id="logo-canvas" />
            </span>
          </div>
        </div>
      </div>
    </main>
  );
}

export default function App() {
  return (
    <div className="flex min-h-screen flex-col bg-[#efefef] font-['Lato','Noto_Sans',sans-serif] text-[12px] text-black">
      <header className="flex h-[35px] items-center pl-[9px] pr-4 text-[#444]">
        <div className="flex w-[23px]">
          <Logo id="logo-title" w={14} h={13} />
        </div>
        <h1>Cathodic Protection Designer</h1>
        <div className="ml-auto flex items-center gap-8 text-[#333]">
          <button aria-label="Minimize">
            <Svg size={12}><path d="M1 5.5 H11" stroke="currentColor" /></Svg>
          </button>
          <button aria-label="Restore">
            <Svg size={12}><path d="M1.5 3.5 H8.5 V10.5 H1.5 Z M3.5 3 V1.5 H10.5 V8.5 H9" stroke="currentColor" /></Svg>
          </button>
          <button aria-label="Close">
            <Svg size={12}><path d="M1 1 L11 11 M11 1 L1 11" stroke="currentColor" strokeWidth="1.1" /></Svg>
          </button>
        </div>
      </header>
      <nav className="flex h-[29px] items-stretch gap-[27px] pl-9 text-[13px]">
        <button>File</button>
        <button className="border-b-2 border-[#2f8acb] pt-[2px] text-[#2f8acb]">Home</button>
      </nav>
      <div className="mx-[7px] flex h-[104px] rounded-t-[3px] bg-[#fafbff] shadow-[0_1px_2px_#b8b8b8]">
        <RibbonGroup label="Navigation" pad="pl-3 pr-[10px]">
          <RibbonButton icon={<IconCad />} label="CAD" width="w-10" />
          <RibbonButton icon={<IconVolume />} label={<>Enclosing<br />Volume</>} width="w-16" />
          <RibbonButton icon={<IconMaterial />} label="Material" width="w-[58px]" />
          <RibbonButton icon={<IconMesh />} label="Mesh" width="w-11" />
          <RibbonButton icon={<IconStudy />} label="Study" width="w-[42px]" />
          <RibbonButton icon={<IconResults />} label="Results" width="w-[52px]" active />
          <RibbonButton icon={<IconReport />} label="Report" width="w-12" />
        </RibbonGroup>
        <RibbonGroup label="Study" pad="px-[9px]">
          <RibbonButton icon={<IconCompute />} label="Compute" width="w-16" />
        </RibbonGroup>
        <RibbonGroup label="Help" pad="px-[9px]">
          <RibbonButton icon={<IconPdf />} label="Documention" width="w-[86px]" />
          <RibbonButton icon={<IconHelp />} label={<>Dynamic<br />Help</>} width="w-[62px]" active />
        </RibbonGroup>
      </div>
      <div className="mb-[34px] mt-[9px] grid flex-1 grid-cols-[344px_minmax(0,1fr)_338px] gap-2 px-[7px]">
        <ResultsPanel />
        <GraphicsPanel />
        <aside className="rounded-t-[3px] bg-[#fafbff] shadow-[0_0_0_1px_#ebebed]">
          <div className="flex h-[42px] items-center justify-between pl-[7px] pr-[6px]">
            <h2 className="text-[21px] leading-7 text-[#2a5ba6]">Help – Results</h2>
            <div className="-mt-1">
              <PanelControls close color="text-[#b9babd]" />
            </div>
          </div>
          <h3 className="pl-[6px] pt-[3px] text-[15px] leading-5 text-[#4a98d2]">Results</h3>
          <p className="whitespace-pre pl-[7px] pt-[6px] leading-[15px]">
            {"Select which study case and which plot you want to\ninvestigate.  Click in the graphics window to get the values at\nthe picking point in the results data table."}
          </p>
        </aside>
      </div>
    </div>
  );
}
